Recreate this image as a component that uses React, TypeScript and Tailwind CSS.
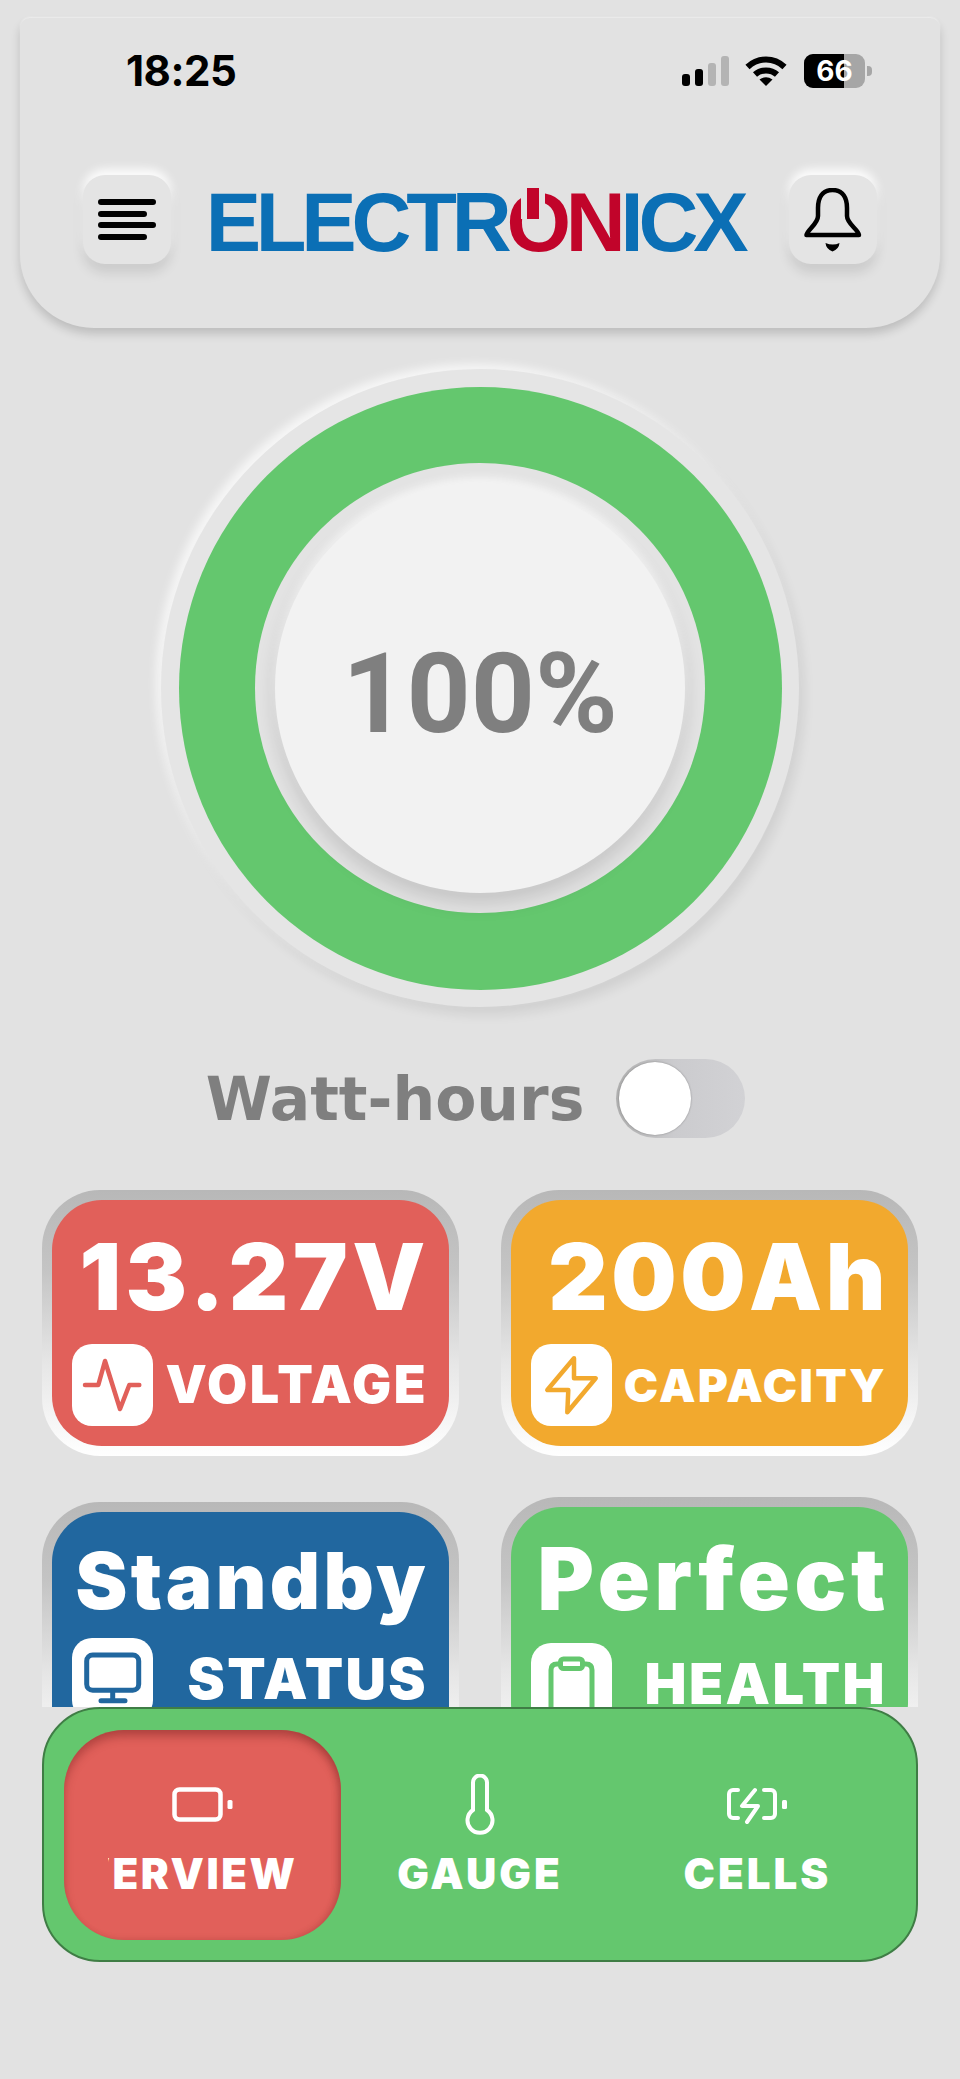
import { type FC, type ReactNode } from "react";

const PulseIcon: FC = () => (
  <svg width="81" height="82" viewBox="0 0 81 82" fill="none" stroke="#e1605a" strokeWidth="4.5" strokeLinecap="round" strokeLinejoin="round">
    <path d="M13 41H26.3L33 17L48 65L57.3 41H67.3" />
  </svg>
);

const BoltIcon: FC = () => (
  <svg width="81" height="82" viewBox="0 0 81 82" fill="none" stroke="#f2a92e" strokeWidth="4.5" strokeLinecap="round" strokeLinejoin="round">
    <path d="M43 14.3L16.3 46H37.3L36.3 68.3L64.7 34.3H43Z" />
  </svg>
);

const MonitorIcon: FC = () => (
  <svg width="81" height="82" viewBox="0 0 81 82" fill="none" stroke="#21679f" strokeWidth="5" strokeLinecap="round" strokeLinejoin="round">
    <rect x="14.7" y="17" width="52" height="35.3" rx="6" />
    <path d="M40.7 54V62.7M29 62.7H53" />
  </svg>
);

const ClipboardIcon: FC = () => (
  <svg width="81" height="82" viewBox="0 0 81 82" fill="none" stroke="#64c76e" strokeWidth="5" strokeLinecap="round" strokeLinejoin="round">
    <path d="M20 80V27Q20 21 26 21H29M52 21H55Q61 21 61 27V80" />
    <rect x="29.5" y="16" width="22" height="9.5" rx="3" />
  </svg>
);

const BatteryIcon: FC = () => (
  <svg width="62" height="36" viewBox="0 0 62 36" fill="none" stroke="#fff" strokeWidth="4.5" strokeLinejoin="round">
    <rect x="2.5" y="2.5" width="46" height="30" rx="5" />
    <rect x="55.5" y="13" width="5" height="9" rx="1.5" fill="#fff" stroke="none" />
  </svg>
);

const ThermometerIcon: FC = () => (
  <svg width="30" height="62" viewBox="0 0 30 62" fill="none" stroke="#fff" strokeWidth="4">
    <path d="M8 36V8.5a7 7 0 0 1 14 0V36A12.5 12.5 0 1 1 8 36Z" />
  </svg>
);

const CellsIcon: FC = () => (
  <svg width="62" height="38" viewBox="0 0 62 38" fill="none" stroke="#fff" strokeWidth="4" strokeLinecap="round" strokeLinejoin="round">
    <path d="M12 4H7a4 4 0 0 0-4 4v20a4 4 0 0 0 4 4h5" />
    <path d="M38 4h7a4 4 0 0 1 4 4v20a4 4 0 0 1-4 4h-7" />
    <path d="M29 4L16 20H32L21 36" />
    <rect x="56" y="14" width="5" height="9" rx="1.5" fill="#fff" stroke="none" />
  </svg>
);

const MenuIcon: FC = () => (
  <svg width="58" height="42" viewBox="0 0 58 42" fill="none" stroke="#000" strokeWidth="6" strokeLinecap="round">
    <path d="M3 3H55M3 15H46M3 26H55M3 38H46" />
  </svg>
);

const BellIcon: FC = () => (
  <svg width="58" height="64" viewBox="0 0 58 64" fill="none">
    <path d="M28.5 2C18 2 14 10 14 20V28C14 36 3 42 2.5 47H55C55 42 43 36 43 28V20C43 10 39 2 28.5 2Z" stroke="#000" strokeWidth="4.5" strokeLinejoin="round" />
    <path d="M21.5 55Q29 58 35.5 55Q35 61 28.5 63.5Q22 61 21.5 55Z" fill="#000" />
  </svg>
);

const WifiIcon: FC = () => (
  <svg width="42" height="30" viewBox="0 0 42 30" fill="none" stroke="#000" strokeWidth="6">
    <path d="M2.5 11C13 1 29 1 39.5 11" />
    <path d="M10 18.5C16 13 26 13 32 18.5" />
    <path d="M14.5 23.5Q21 19 27.5 23.5L21 30Z" fill="#000" stroke="none" />
  </svg>
);

const Signal: FC = () => (
  <div className="flex items-end gap-[5px] h-[30px]">
    <div className="w-[8px] h-[12px] rounded-[3px] bg-black" />
    <div className="w-[8px] h-[17px] rounded-[3px] bg-black" />
    <div className="w-[8px] h-[23px] rounded-[3px] bg-[#b4b4b4]" />
    <div className="w-[8px] h-[30px] rounded-[3px] bg-[#b4b4b4]" />
  </div>
);

type CardProps = {
  bg: string;
  className: string;
  value: string;
  valueClass: string;
  label: string;
  labelClass: string;
  icon: ReactNode;
};

const Card: FC<CardProps> = ({ bg, className, value, valueClass, label, labelClass, icon }) => (
  <div className={`w-[417px] h-[266px] rounded-[58px] bg-[linear-gradient(180deg,#b8b8b8_0%,#c4c4c4_30%,#e6e6e6_65%,#ffffff_100%)] p-[10px] ${className}`}>
    <div className={`h-[246px] rounded-[50px] pl-[20px] pr-[21px] flex flex-col ${bg}`}>
      <div className={`text-white font-black text-right whitespace-nowrap leading-none ${valueClass}`}>{value}</div>
      <div className="flex items-center justify-between">
        <div className="w-[81px] h-[82px] rounded-[20px] bg-white shrink-0">{icon}</div>
        <div className={`text-white font-black whitespace-nowrap leading-none ${labelClass}`}>{label}</div>
      </div>
    </div>
  </div>
);

export default function App() {
  return (
    <div className="w-[960px] h-[2079px] bg-[#e2e2e2] overflow-hidden font-[Inter,sans-serif]">
      {/* header */}
      <div className="mx-[20px] mt-[18px] h-[310px] rounded-t-[10px] rounded-b-[74px] bg-[#e2e2e2] shadow-[0_6px_10px_rgba(0,0,0,0.16),0_-1px_2px_rgba(255,255,255,0.5)] relative">
        <div className="flex items-center justify-between pl-[106px] pr-[68px] pt-[35px]">
          <div className="text-[42px] font-bold leading-[36px] text-black tracking-[-0.5px]">18:25</div>
          <div className="flex items-center">
            <Signal />
            <div className="ml-[16px]"><WifiIcon /></div>
            <div className="ml-[17px] relative w-[61px] h-[34px] rounded-[9px] bg-[#a6a6a6] overflow-hidden flex items-center justify-center">
              <div className="absolute left-0 top-0 bottom-0 w-[40px] bg-black" />
              <span className="relative text-white text-[28px] font-bold leading-none">66</span>
            </div>
            <div className="ml-[2px] w-[5px] h-[10px] rounded-r-[4px] bg-[#a6a6a6]" />
          </div>
        </div>
        <div className="flex items-center justify-between pl-[63px] pr-[63px] mt-[86px]">
          <div className="w-[88px] h-[89px] rounded-[22px] bg-[#e4e4e4] flex items-center justify-center shadow-[0_9px_12px_rgba(0,0,0,0.1),0_-6px_10px_rgba(255,255,255,0.9)]">
            <MenuIcon />
          </div>
          <div className="mr-[11px] mt-[6px] font-['Liberation_Sans',sans-serif] font-bold text-[83px] leading-none tracking-[-5.2px] text-[#0b6fb5] whitespace-nowrap">
            ELECTR
            <span className="relative text-[#c1042a]">
              O
              <span className="absolute left-[15px] top-[12px] w-[24px] h-[31px] bg-[#c1042a] border-x-[6px] border-[#e2e2e2]" />
            </span>
            <span className="text-[#c1042a]">N</span>ICX
          </div>
          <div className="w-[88px] h-[89px] rounded-[22px] bg-[#e4e4e4] flex items-center justify-center shadow-[0_9px_12px_rgba(0,0,0,0.1),0_-6px_10px_rgba(255,255,255,0.9)]">
            <BellIcon />
          </div>
        </div>
      </div>

      {/* gauge ring */}
      <div className="flex justify-center mt-[41px]">
        <div className="w-[638px] h-[638px] rounded-full bg-[#e5e5e5] flex items-center justify-center shadow-[5px_8px_12px_rgba(0,0,0,0.08),-5px_-5px_10px_rgba(255,255,255,0.7)]">
          <div className="w-[603px] h-[603px] rounded-full bg-[#64c76e] flex items-center justify-center">
            <div className="w-[450px] h-[450px] rounded-full bg-[#e3e3e3] flex items-center justify-center">
              <div className="w-[410px] h-[410px] rounded-full bg-[#f2f2f2] flex items-center justify-center pt-[12px] shadow-[0_10px_20px_rgba(0,0,0,0.14),0_-5px_8px_rgba(255,255,255,0.8)]">
                <span className="font-[Roboto,sans-serif] font-bold text-[112px] leading-none text-[#7f7f7f]">100%</span>
              </div>
            </div>
          </div>
        </div>
      </div>

      {/* watt-hours toggle */}
      <div className="flex items-center justify-center gap-[32px] pr-[9px] mt-[52px] h-[79px]">
        <span className="font-['DejaVu_Sans',sans-serif] font-bold text-[60px] leading-none text-[#7f7f7f]">Watt-hours</span>
        <div className="w-[129px] h-[79px] rounded-full bg-[linear-gradient(90deg,#b0b0b0_0%,#cbcbce_45%,#d2d2d5_100%)] p-[3px]">
          <div className="w-[72px] h-[73px] rounded-full bg-white shadow-[0_0_2px_rgba(0,0,0,0.35)]" />
        </div>
      </div>

      {/* stat cards, the bottom row runs under the tab bar */}
      <div className="mt-[52px] h-[517px] overflow-hidden px-[42px] grid grid-cols-[417px_417px] gap-x-[42px] content-start items-start">
        <Card
          bg="bg-[#e1605a]"
          className=""
          value="13.27V"
          valueClass="text-[92px] tracking-[4.6px] -mr-[2px] mt-[31px] mb-[27px] h-[86px]"
          label="VOLTAGE"
          labelClass="text-[52px] tracking-[2.5px]"
          icon={<PulseIcon />}
        />
        <Card
          bg="bg-[#f2a92e]"
          className=""
          value="200Ah"
          valueClass="text-[92px] tracking-[3.5px] -mr-[2px] mt-[31px] mb-[27px] h-[86px]"
          label="CAPACITY"
          labelClass="text-[46px] tracking-[2.3px]"
          icon={<BoltIcon />}
        />
        <Card
          bg="bg-[#21679f]"
          className="mt-[46px]"
          value="Standby"
          valueClass="text-[78px] tracking-[3.4px] -mr-[1px] mt-[30px] mb-[17px] h-[79px]"
          label="STATUS"
          labelClass="text-[56px] tracking-[2.4px]"
          icon={<MonitorIcon />}
        />
        <Card
          bg="bg-[#64c76e]"
          className="mt-[41px]"
          value="Perfect"
          valueClass="text-[86px] tracking-[4.6px] -mr-[3px] mt-[29px] mb-[21px] h-[86px]"
          label="HEALTH"
          labelClass="text-[56px] tracking-[2.4px]"
          icon={<ClipboardIcon />}
        />
      </div>

      {/* tab bar */}
      <div className="mx-[42px] h-[255px] rounded-[58px] bg-[#64c76e] border-2 border-[#3f7d45] px-[20px] pt-[21px] grid grid-cols-3 items-start">
        <div className="h-[210px] rounded-[60px] bg-[#e1605a] shadow-[inset_0_7px_9px_rgba(110,30,30,0.35),inset_-3px_0_6px_rgba(110,30,30,0.22)] flex flex-col items-center pt-[44px]">
          <div className="h-[62px] flex items-center"><BatteryIcon /></div>
          <div className="w-[190px] mt-[16px] overflow-hidden flex justify-end">
            <span className="text-white font-black text-[42px] leading-[44px] tracking-[2.6px] whitespace-nowrap">OVERVIEW</span>
          </div>
        </div>
        <div className="flex flex-col items-center pt-[44px]">
          <div className="h-[62px] flex items-center"><ThermometerIcon /></div>
          <span className="mt-[16px] text-white font-black text-[42px] leading-[44px] tracking-[3px]">GAUGE</span>
        </div>
        <div className="flex flex-col items-center pt-[44px]">
          <div className="h-[62px] flex items-center"><CellsIcon /></div>
          <span className="mt-[16px] text-white font-black text-[42px] leading-[44px] tracking-[3px]">CELLS</span>
        </div>
      </div>
    </div>
  );
}
